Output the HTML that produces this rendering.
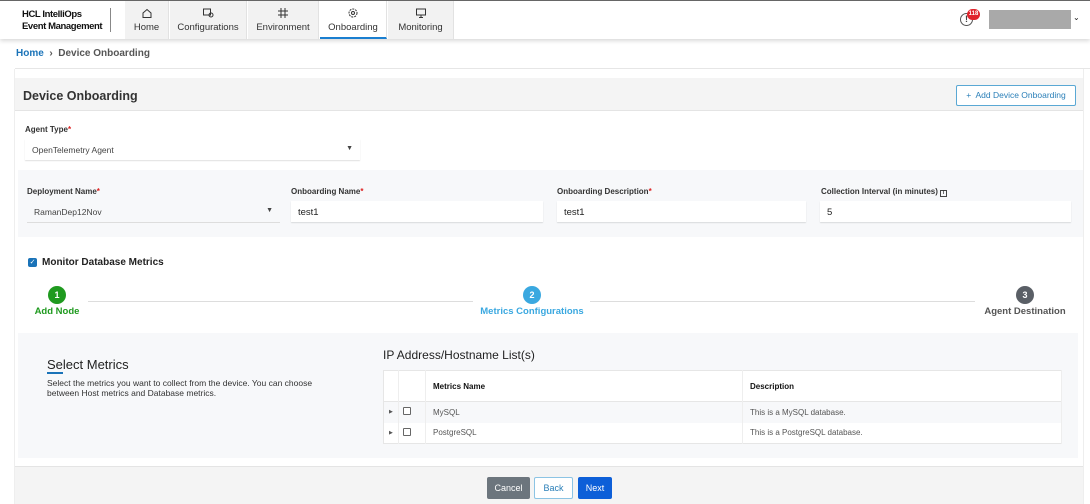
<!DOCTYPE html><html><head><meta charset="utf-8"><style>
*{margin:0;padding:0;box-sizing:border-box}
body{width:1090px;height:504px;overflow:hidden;background:#fff;font-family:"Liberation Sans",sans-serif;color:#222;position:relative}
.a{position:absolute}
.nav{left:0;top:0;width:1090px;height:39px;background:#fff;box-shadow:0 2px 4px rgba(0,0,0,.15);border-top:1px solid #666}
.tab{top:1px;height:38px;background:#f2f2f2;border-right:1px solid #e2e2e2;text-align:center;font-size:9.5px;color:#333}
.tab .ic{display:block;margin:6px auto 0;width:12px;height:12px}
.tab span{display:block;margin-top:3px}
.lbl{font-size:8px;font-weight:bold;color:#333}
.lbl b{color:#d22}
.inp{background:#fff;height:21px;font-size:9.5px;padding:6px 7px;box-shadow:0 1px 1px rgba(0,0,0,.12)}
.circ{width:18px;height:18px;border-radius:50%;color:#fff;font-size:9px;font-weight:bold;text-align:center;line-height:18px}
.slbl{font-size:9.5px;font-weight:bold;text-align:center;width:160px}
td{font-size:8px;color:#555;border-right:1px solid #eee;padding-left:7px}
</style></head><body>
<div class="a nav"></div>
<div class="a" style="left:22px;top:9px;font-size:9.5px;font-weight:bold;line-height:12px;color:#111;letter-spacing:-0.4px">HCL IntelliOps<br>Event Management</div>
<div class="a" style="left:110px;top:8px;width:1px;height:24px;background:#888"></div>
<div class="a tab" style="left:125px;width:44px"><svg class="ic" viewBox="0 0 12 12"><path d="M2 6L6 2.5 10 6V10.5H2Z" fill="none" stroke="#333"/></svg><span>Home</span></div>
<div class="a tab" style="left:170px;width:77px"><svg class="ic" viewBox="0 0 12 12"><rect x="1.5" y="2" width="7" height="6" fill="none" stroke="#333"/><circle cx="9" cy="8" r="2" fill="none" stroke="#333"/></svg><span>Configurations</span></div>
<div class="a tab" style="left:248px;width:71px"><svg class="ic" viewBox="0 0 12 12"><path d="M4 1V11M8 1V11M1 4H11M1 8H11" stroke="#333"/></svg><span>Environment</span></div>
<div class="a tab" style="left:320px;width:67px;background:#fff;border-bottom:2px solid #1a7fd0"><svg class="ic" viewBox="0 0 12 12"><circle cx="6" cy="6" r="4" fill="none" stroke="#333" stroke-dasharray="2 1"/><circle cx="6" cy="6" r="1.5" fill="none" stroke="#333"/></svg><span>Onboarding</span></div>
<div class="a tab" style="left:388px;width:66px"><svg class="ic" viewBox="0 0 12 12"><rect x="1.5" y="2" width="9" height="6" fill="none" stroke="#333"/><path d="M4 10.5H8M6 8V10.5" stroke="#333"/></svg><span>Monitoring</span></div>
<div class="a" style="left:960px;top:13px;width:13px;height:13px;border:1.3px solid #555;border-radius:50%;font-size:9px;text-align:center;line-height:11px;font-weight:bold;color:#444">!</div>
<div class="a" style="left:967px;top:9px;width:13px;height:11px;border-radius:6px;background:#e0242c;color:#fff;font-size:6px;font-weight:bold;text-align:center;line-height:11px">118</div>
<div class="a" style="left:989px;top:10px;width:82px;height:19px;background:#a9a9a9"></div>
<div class="a" style="left:1073px;top:13px;font-size:8px">&#8964;</div>
<div class="a" style="left:16px;top:48px;font-size:10px;font-weight:bold;color:#555"><span style="color:#1a73b8">Home</span> &nbsp;›&nbsp; Device Onboarding</div>
<div class="a" style="left:15px;top:68px;width:1075px;height:1px;background:#e6e6e6"></div>
<div class="a" style="left:14px;top:69px;width:1px;height:435px;background:#eee"></div>
<div class="a" style="left:1083px;top:69px;width:1px;height:435px;background:#eee"></div>
<div class="a" style="left:15px;top:78px;width:1068px;height:33px;background:#f4f4f4;border-bottom:1px solid #e4e4e4"></div>
<div class="a" style="left:23px;top:89px;font-size:12.5px;font-weight:bold;color:#333">Device Onboarding</div>
<div class="a" style="left:956px;top:85px;width:120px;height:21px;border:1px solid #5aa8d4;border-radius:2px;background:#fff;color:#2a7fb8;font-size:8.5px;text-align:center;line-height:19px">+&nbsp; Add Device Onboarding</div>
<div class="a lbl" style="left:25px;top:125px">Agent Type<b>*</b></div>
<div class="a inp" style="left:25px;top:139px;width:335px;color:#444;font-size:8.5px">OpenTelemetry Agent<span style="float:right;font-size:7px">▼</span></div>
<div class="a" style="left:18px;top:170px;width:1065px;height:67px;background:#f7f8fa"></div>
<div class="a lbl" style="left:27px;top:187px">Deployment Name<b>*</b></div>
<div class="a lbl" style="left:291px;top:187px">Onboarding Name<b>*</b></div>
<div class="a lbl" style="left:557px;top:187px">Onboarding Description<b>*</b></div>
<div class="a lbl" style="left:821px;top:187px">Collection Interval (in minutes) <span style="display:inline-block;width:7px;height:7px;border:1px solid #444;font-size:5px;text-align:center;line-height:5px">i</span></div>
<div class="a inp" style="left:27px;top:201px;width:253px;background:#f7f8fa;box-shadow:0 1px 0 #ddd;font-size:8.5px;color:#444">RamanDep12Nov<span style="float:right;font-size:7px">▼</span></div>
<div class="a inp" style="left:291px;top:201px;width:252px">test1</div>
<div class="a inp" style="left:557px;top:201px;width:249px">test1</div>
<div class="a inp" style="left:820px;top:201px;width:251px">5</div>
<div class="a" style="left:28px;top:258px;width:9px;height:9px;background:#1a73b8;border-radius:2px;color:#fff;font-size:7px;line-height:9px;text-align:center">✓</div>
<div class="a" style="left:42px;top:257px;font-size:10px;font-weight:bold;color:#222">Monitor Database Metrics</div>
<div class="a" style="left:88px;top:301px;width:385px;height:1px;background:#ddd"></div>
<div class="a" style="left:590px;top:301px;width:385px;height:1px;background:#ddd"></div>
<div class="a circ" style="left:48px;top:286px;background:#1f9a1f">1</div>
<div class="a circ" style="left:523px;top:286px;background:#3aa8e0">2</div>
<div class="a circ" style="left:1016px;top:286px;background:#5a5f66">3</div>
<div class="a slbl" style="left:-23px;top:306px;color:#1f9a1f">Add Node</div>
<div class="a slbl" style="left:452px;top:306px;color:#3aa8e0">Metrics Configurations</div>
<div class="a slbl" style="left:945px;top:306px;color:#555">Agent Destination</div>
<div class="a" style="left:18px;top:333px;width:1060px;height:125px;background:#f7f8fa"></div>
<div class="a" style="left:47px;top:357px;font-size:13px;color:#222">Select Metrics</div>
<div class="a" style="left:47px;top:372px;width:16px;height:2px;background:#1a73b8"></div>
<div class="a" style="left:47px;top:379px;font-size:8.5px;line-height:9.5px;color:#333">Select the metrics you want to collect from the device. You can choose<br>between Host metrics and Database metrics.</div>
<div class="a" style="left:383px;top:348px;font-size:12px;color:#222">IP Address/Hostname List(s)</div>
<table class="a" style="left:383px;top:370px;width:679px;border-collapse:collapse;border:1px solid #e6e6e6">
<tr style="height:31px;background:#fff;border-bottom:1px solid #e6e6e6"><td style="width:15px"></td><td style="width:27px"></td><td style="width:317px;font-weight:bold;color:#111">Metrics Name</td><td style="font-weight:bold;color:#111">Description</td></tr>
<tr style="height:21px;background:#f7f8fa"><td style="padding-left:5px;font-size:5px">▶</td><td style="padding-left:4px"><span style="display:inline-block;width:8px;height:8px;border:1px solid #666;border-radius:1px;background:#fff"></span></td><td>MySQL</td><td>This is a MySQL database.</td></tr>
<tr style="height:21px;background:#fff"><td style="padding-left:5px;font-size:5px">▶</td><td style="padding-left:4px"><span style="display:inline-block;width:8px;height:8px;border:1px solid #666;border-radius:1px;background:#fff"></span></td><td>PostgreSQL</td><td>This is a PostgreSQL database.</td></tr>
</table>
<div class="a" style="left:15px;top:466px;width:1068px;height:38px;background:#f4f4f4;border-top:1px solid #e4e4e4"></div>
<div class="a" style="left:487px;top:477px;width:43px;height:22px;background:#6c757d;color:#fff;font-size:9px;text-align:center;line-height:22px;border-radius:2px">Cancel</div>
<div class="a" style="left:534px;top:477px;width:39px;height:22px;background:#fff;border:1px solid #8cc4e4;color:#2a7fb8;font-size:9px;text-align:center;line-height:20px;border-radius:2px">Back</div>
<div class="a" style="left:578px;top:477px;width:34px;height:22px;background:#0d5fd8;color:#fff;font-size:9px;text-align:center;line-height:22px;border-radius:2px">Next</div>
</body></html>
